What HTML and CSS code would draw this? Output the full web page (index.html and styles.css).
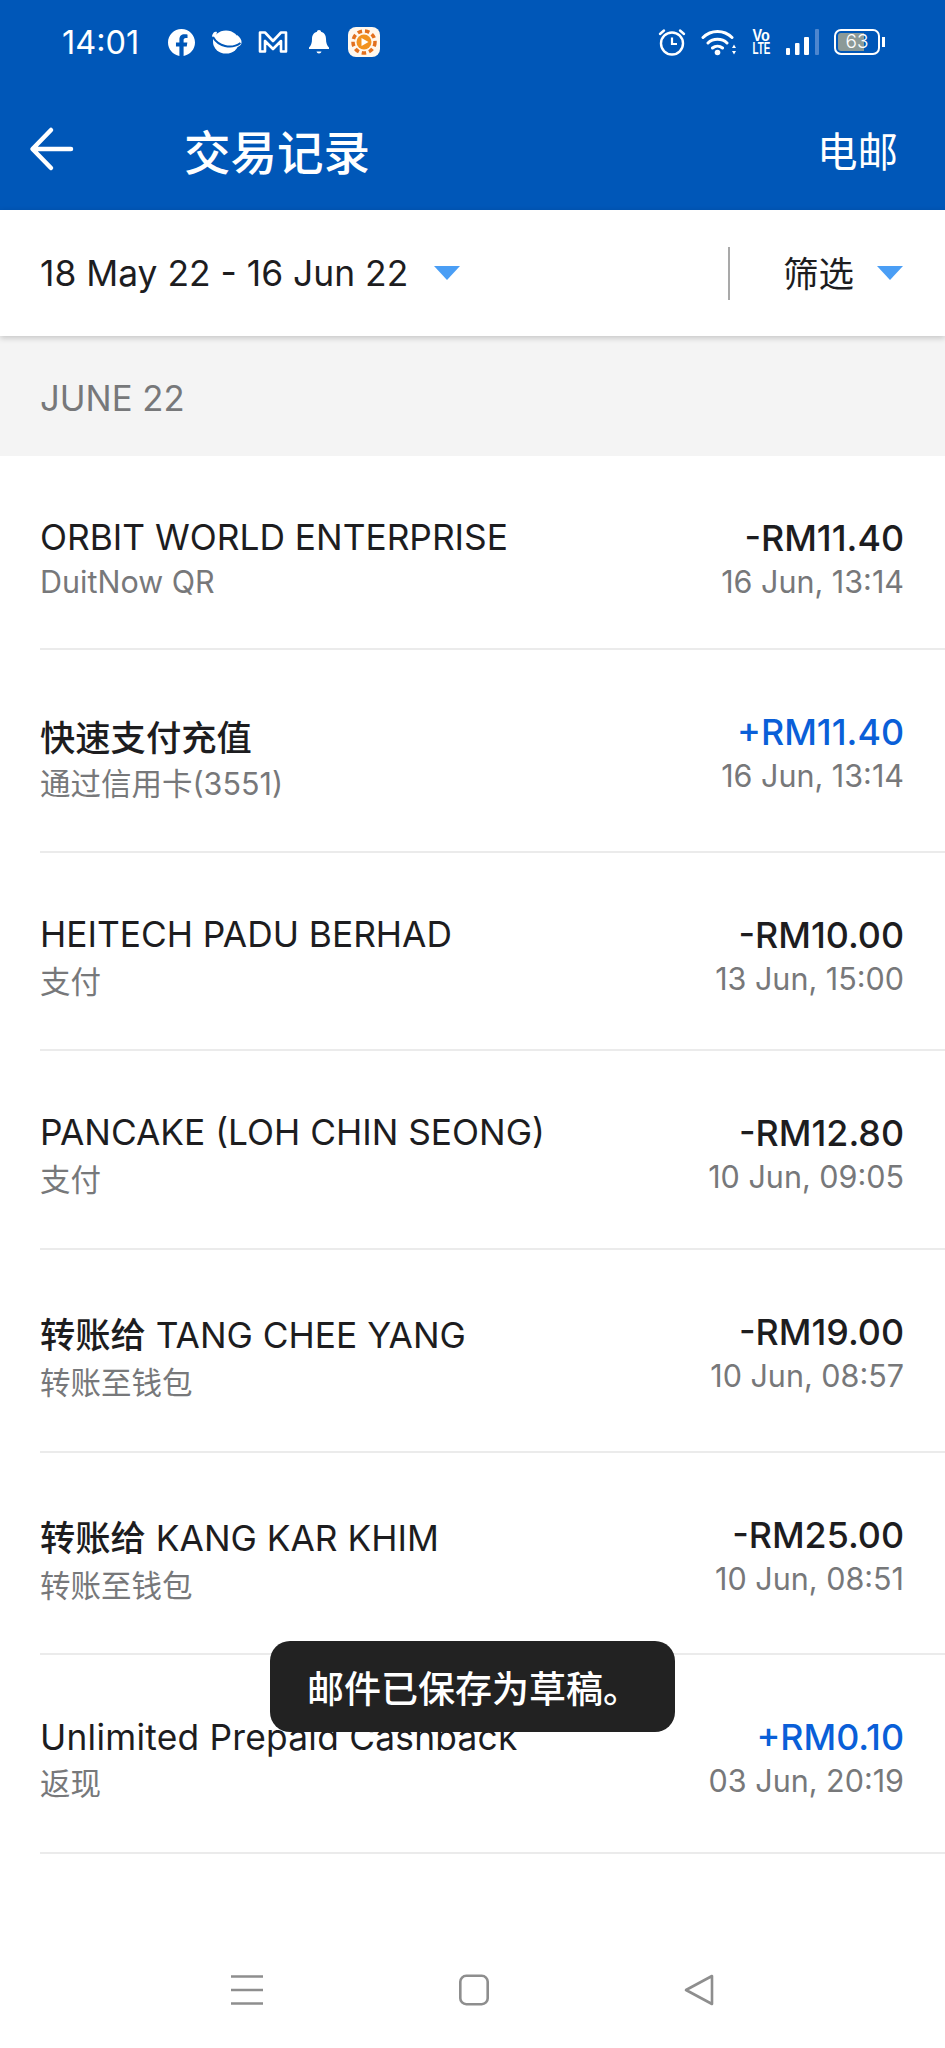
FILE: index.html
```html
<!DOCTYPE html>
<html>
<head>
    <meta charset="utf-8" />
    <title>交易记录</title>
    <link rel="stylesheet" href="styles.css">
</head>
<body>
    <header class="fejlec">
        <div class="statusbar">
            <span class="ido">14:01</span>
            <div class="ikonok balra">
                <svg width="27" height="27" viewBox="0 0 24 24"><path d="M24 12.070c0-6.630-5.370-12-12-12s-12 5.370-12 12c0 5.990 4.390 10.950 10.130 11.850v-8.380H7.080v-3.470h3.050V9.430c0-3.010 1.790-4.670 4.530-4.670 1.310 0 2.690.24 2.690.24v2.950H15.830c-1.490 0-1.960.93-1.960 1.870v2.250h3.330l-.53 3.470h-2.800v8.380C19.610 23.030 24 18.060 24 12.070z" fill="#fff"/></svg>
                <svg width="31" height="26" viewBox="0 0 31 26"><ellipse cx="15" cy="13" rx="13" ry="11.500" fill="#fff"/><path d="M26 6c3 2 5 5 4.500 8-.3 2-2 3.500-4.500 4z" fill="#fff"/><path d="M1 7C2 3 4 2 6 3L4 11z" fill="#fff"/><path d="M2 8C7 17 20 21 29.500 14" fill="none" stroke="#0057b8" stroke-width="2"/></svg>
                <svg width="34" height="24" viewBox="0 0 34 24"><path d="M2 21.500V2.500h5l8 8.500 8-8.500h5v19h-5V11l-8 8-8-8v10.500z" fill="none" stroke="#fff" stroke-width="2.600" stroke-linejoin="round"/></svg>
                <svg width="24" height="26" viewBox="0 0 24 26"><path d="M11 1c1.200 0 2 .8 2 1.800 3.500 1 5 4 5 7.200 0 4 1 6.500 3 8.500v1.500H1v-1.500c2-2 3-4.500 3-8.500 0-3.200 1.500-6.200 5-7.200C9 1.800 9.800 1 11 1zM8.500 22.500h5c-.3 1.300-1.200 2-2.500 2s-2.200-.7-2.500-2z" fill="#fff"/></svg>
                <div class="appikon">
                    <svg width="32" height="30" viewBox="0 0 32 30"><circle cx="16" cy="15" r="11" fill="none" stroke="#e2701e" stroke-width="3.500" stroke-dasharray="4.500 3"/><circle cx="16" cy="15" r="7.500" fill="#f2921f"/><path d="M13.500 11l7 4-7 4z" fill="#fff"/></svg>
                </div>
            </div>
            <div class="ikonok jobbra">
                <svg width="28" height="28" viewBox="0 0 28 28"><circle cx="14" cy="15.500" r="11" fill="none" stroke="#fff" stroke-width="2.400"/><path d="M14 9.500v6.500h5" fill="none" stroke="#fff" stroke-width="2.200"/><path d="M2 6l4-3.500M26 6l-4-3.500" stroke="#fff" stroke-width="2.400" stroke-linecap="round"/></svg>
                <svg width="35" height="28" viewBox="0 0 35 28"><path d="M2 9.500C10 1.500 23 1.500 31 9.500M7 15c5-5 14-5 19 0M11.500 20c3-2.500 7-2.500 10 0" fill="none" stroke="#fff" stroke-width="3" stroke-linecap="round"/><circle cx="16.500" cy="24.500" r="2.800" fill="#fff"/><path d="M31 20l2-3.500 2 3.500zM31 23l2 3.500 2-3.500z" fill="#fff"/></svg>
                <div class="volte"><span class="volte-vo">Vo</span><span class="volte-lte">LTE</span></div>
                <svg width="33" height="28" viewBox="0 0 33 28"><rect x="0" y="20" width="4" height="7" rx="1" fill="#fff"/><rect x="9" y="15" width="4.500" height="12" rx="1" fill="#fff"/><rect x="18" y="9" width="5" height="18" rx="1" fill="#fff"/><rect x="29" y="1" width="4" height="26" rx="1" fill="#4d86cf"/></svg>
                <div class="akku">
                    <div class="akku-test"><div class="akku-szint"></div><span class="akku-szam">63</span></div>
                    <div class="akku-fej"></div>
                </div>
            </div>
        </div>
        <div class="cimsor">
            <svg width="48" height="46" viewBox="0 0 48 46"><path d="M43 23H5M23 4L4.500 23 23 42" fill="none" stroke="#fff" stroke-width="4.500" stroke-linecap="round" stroke-linejoin="round"/></svg>
            <h1 class="cim">交易记录</h1>
            <span class="email">电邮</span>
        </div>
    </header>

    <div class="szuro">
        <span class="datum">18 May 22 - 16 Jun 22</span>
        <span class="nyil"></span>
        <div class="valaszto"></div>
        <span class="szuro-szoveg">筛选</span>
        <span class="nyil"></span>
    </div>

    <div class="honap">JUNE 22</div>

    <ul class="lista">
        <li class="sor sor-194">
            <div><div class="nev">ORBIT WORLD ENTERPRISE</div><div class="leiras">DuitNow QR</div></div>
            <div class="jobb"><div class="osszeg">-RM11.40</div><div class="leiras">16 Jun, 13:14</div></div>
        </li>
        <li class="sor sor-203">
            <div><div class="nev nev-teljes"><span class="kinai">快速支付充值</span></div><div class="leiras leiras-kinai">通过信用卡(3551)</div></div>
            <div class="jobb"><div class="osszeg plusz">+RM11.40</div><div class="leiras">16 Jun, 13:14</div></div>
        </li>
        <li class="sor sor-198">
            <div><div class="nev">HEITECH PADU BERHAD</div><div class="leiras leiras-kinai">支付</div></div>
            <div class="jobb"><div class="osszeg">-RM10.00</div><div class="leiras">13 Jun, 15:00</div></div>
        </li>
        <li class="sor sor-199">
            <div><div class="nev">PANCAKE (LOH CHIN SEONG)</div><div class="leiras leiras-kinai">支付</div></div>
            <div class="jobb"><div class="osszeg">-RM12.80</div><div class="leiras">10 Jun, 09:05</div></div>
        </li>
        <li class="sor sor-203">
            <div><div class="nev nev-kinai"><span class="kinai">转账给</span> TANG CHEE YANG</div><div class="leiras leiras-kinai">转账至钱包</div></div>
            <div class="jobb"><div class="osszeg">-RM19.00</div><div class="leiras">10 Jun, 08:57</div></div>
        </li>
        <li class="sor sor-202">
            <div><div class="nev nev-kinai"><span class="kinai">转账给</span> KANG KAR KHIM</div><div class="leiras leiras-kinai">转账至钱包</div></div>
            <div class="jobb"><div class="osszeg">-RM25.00</div><div class="leiras">10 Jun, 08:51</div></div>
        </li>
        <li class="sor sor-199">
            <div><div class="nev nev-kisbetus">Unlimited Prepaid Cashback</div><div class="leiras leiras-kinai">返现</div></div>
            <div class="jobb"><div class="osszeg plusz">+RM0.10</div><div class="leiras">03 Jun, 20:19</div></div>
        </li>
    </ul>

    <div class="toast">邮件已保存为草稿。</div>

    <nav class="navbar">
        <svg width="32" height="32" viewBox="0 0 32 32"><path d="M0 2.500h32M0 16h32M0 29.500h32" stroke="#8e8e8e" stroke-width="2.600"/></svg>
        <svg width="30" height="32" viewBox="0 0 30 32"><rect x="1.300" y="1.800" width="27.400" height="28.400" rx="6" fill="none" stroke="#8e8e8e" stroke-width="2.600"/></svg>
        <svg width="30" height="32" viewBox="0 0 30 32"><path d="M28 2v28L2 16z" fill="none" stroke="#8e8e8e" stroke-width="2.600" stroke-linejoin="round"/></svg>
    </nav>
</body>
</html>
```

FILE: styles.css
```css
* {
    box-sizing: border-box;
}

html, body {
    margin: 0;
    padding: 0;
}

body {
    position: relative;
    display: flex;
    flex-direction: column;
    height: 2048px;
    overflow: hidden;
    background-color: #fff;
    color: #1d1d1f;
    font-family: Inter, "Noto Sans CJK SC", sans-serif;
}

.fejlec {
    height: 210px;
    background-color: #0057b8;
    color: #fff;
}

.statusbar {
    display: flex;
    align-items: center;
    height: 84px;
    padding-left: 62px;
}

.ido {
    width: 106px;
    font-size: 32.500px;
}

.ikonok {
    display: flex;
    align-items: center;
}

.balra {
    gap: 16px;
}

.jobbra {
    gap: 15px;
    margin-left: auto;
    padding-right: 60px;
}

.appikon {
    display: flex;
    width: 32px;
    height: 30px;
    border-radius: 8px;
    background-color: #fff8ee;
}

.volte {
    display: flex;
    flex-direction: column;
    align-items: center;
    width: 20px;
    font-family: "Liberation Sans", sans-serif;
    font-size: 17px;
    font-weight: 700;
    line-height: 13px;
}

.volte-vo {
    transform: scaleX(0.85);
}

.volte-lte {
    transform: scaleX(0.58);
}

.akku {
    display: flex;
    align-items: center;
    gap: 2px;
}

.akku-test {
    position: relative;
    width: 46px;
    height: 26px;
    padding: 2px;
    border: 2px solid #fff;
    border-radius: 7px;
}

.akku-szint {
    width: 26px;
    height: 100%;
    border-radius: 3px 0 0 3px;
    background-color: #8c9a97;
}

.akku-szam {
    position: absolute;
    top: 0;
    left: 0;
    width: 100%;
    font-size: 19px;
    font-weight: 300;
    line-height: 22px;
    text-align: center;
}

.akku-fej {
    width: 3px;
    height: 10px;
    background-color: #fff;
}

.cimsor {
    display: flex;
    align-items: center;
    height: 126px;
    padding: 4px 47px 0 28px;
}

.cim {
    margin: 0 0 0 108px;
    font-size: 46.500px;
    font-weight: 500;
}

.email {
    margin-left: auto;
    font-size: 40.500px;
}

.szuro {
    position: relative;
    display: flex;
    align-items: center;
    height: 126px;
    padding: 0 42px 0 40px;
    background-color: #fff;
    box-shadow: 0 2px 6px rgba(0, 0, 0, 0.2);
}

.datum {
    margin-right: 26px;
    font-size: 35.400px;
}

.nyil {
    width: 0;
    height: 0;
    border-left: 13px solid transparent;
    border-right: 13px solid transparent;
    border-top: 14px solid #4a9ef5;
}

.valaszto {
    width: 2px;
    height: 53px;
    margin: 0 53px 0 auto;
    background-color: #a9a9a9;
}

.szuro-szoveg {
    margin-right: 23px;
    padding-bottom: 3px;
    font-size: 35.500px;
}

.honap {
    display: flex;
    align-items: center;
    height: 120px;
    padding: 3px 0 0 40px;
    background-color: #f4f4f4;
    color: #77787a;
    font-size: 34.700px;
}

.lista {
    flex: 1;
    margin: 0;
    padding: 0 0 0 40px;
    list-style: none;
}

.sor {
    display: flex;
    justify-content: space-between;
    padding: 60px 41px 0 0;
    border-bottom: 2px solid #ebebeb;
}

.sor-194 { height: 194px; }
.sor-198 { height: 198px; }
.sor-199 { height: 199px; }
.sor-202 { height: 202px; }
.sor-203 { height: 203px; }

.nev {
    font-size: 35.300px;
    line-height: 44px;
}

.nev-kinai {
    margin-top: 4px;
}

.nev-teljes {
    margin-top: 9px;
    line-height: 40px;
}

.nev-kisbetus {
    letter-spacing: 0.25px;
    margin-top: 1px;
    margin-bottom: -1px;
}

.kinai {
    font-weight: 500;
}

.osszeg {
    font-size: 35.800px;
    font-weight: 450;
    line-height: 44px;
    text-align: right;
}

.plusz {
    color: #0a5fd8;
}

.leiras {
    color: #77787a;
    font-size: 30.500px;
    line-height: 43px;
}

.leiras-kinai {
    margin-top: 3px;
}

.jobb .leiras {
    text-align: right;
}

.toast {
    position: absolute;
    left: 270px;
    top: 1641px;
    display: flex;
    align-items: center;
    width: 405px;
    height: 91px;
    padding-left: 37px;
    border-radius: 20px;
    background-color: #222;
    color: #fff;
    font-size: 37px;
    font-weight: 500;
}

.navbar {
    display: flex;
    justify-content: space-between;
    padding: 0 231px 42px 231px;
}
```
